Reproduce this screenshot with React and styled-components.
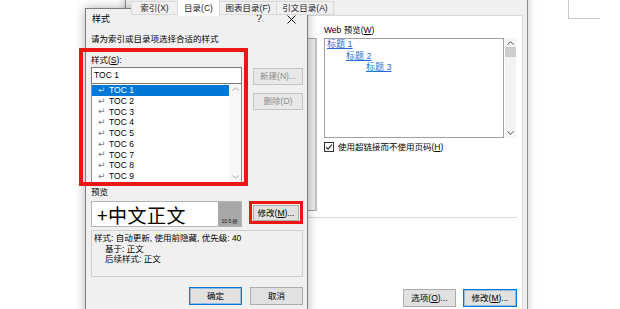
import React from "react";
import styled, { createGlobalStyle } from "styled-components";

const UI = `"Liberation Sans", "Noto Sans CJK SC", sans-serif`;

const Global = createGlobalStyle`
  html, body { margin: 0; padding: 0; background: #fff; }
  body { font-family: ${UI}; }
  * { box-sizing: border-box; }
`;

const Desktop = styled.div`
  position: relative;
  width: 620px;
  height: 309px;
  overflow: hidden;
  background: #fff;
  font-family: ${UI};
  font-size: 8.5px;
  line-height: 1;
  color: #000;
`;

const PageCorner = styled.div`
  position: absolute;
  left: 568px;
  top: -1px;
  width: 32px;
  height: 20px;
  border-left: 1px solid #c9c9c9;
  border-bottom: 1px solid #c9c9c9;
`;

/* ---------- back dialog (索引和目录) ---------- */
const BackDialog = styled.div`
  position: absolute;
  left: 125px;
  top: -12px;
  width: 403px;
  height: 340px;
  background: #f0f0f0;
  border: 1px solid #8c8c8c;
  box-shadow: 0 0 8px rgba(0, 0, 0, 0.22);
  display: flex;
  flex-direction: column;
  padding: 0 4px 0 4px;
`;

const TabStrip = styled.div`
  height: 26px;
  display: flex;
  align-items: flex-end;
  position: relative;
  z-index: 1;
`;

const Tab = styled.div`
  width: ${(p) => p.$w}px;
  height: ${(p) => (p.$active ? 17 : 14)}px;
  margin-left: -1px;
  margin-bottom: ${(p) => (p.$active ? -1 : 0)}px;
  background: ${(p) => (p.$active ? "#fff" : "#f0f0f0")};
  border: 1px solid #d9d9d9;
  border-bottom: ${(p) => (p.$active ? "none" : "1px solid #d9d9d9")};
  display: flex;
  align-items: center;
  justify-content: center;
  padding-top: ${(p) => (p.$active ? 0 : 1)}px;
  white-space: nowrap;
  color: #222;
  &:first-child { margin-left: 1px; }
`;

const TabPage = styled.div`
  flex: 1;
  background: #fff;
  border: 1px solid #d9d9d9;
  padding: 7px 5px 0 7px;
  display: flex;
  flex-direction: column;
`;

const TopRow = styled.div`
  display: grid;
  grid-template-columns: 179px 192px;
  column-gap: 7px;
  height: 188px;
`;

const Column = styled.div`
  display: flex;
  flex-direction: column;
`;

const GroupLabel = styled.div`
  height: 13px;
  line-height: 13px;
  padding-top: 1px;
`;

const PrintBox = styled.div`
  flex: 1;
  margin-top: 2px;
  display: flex;
  border: 1px solid #a0a0a0;
  border-right: 2px solid #c4c4c4;
  background: #fff;
`;

const PrintContent = styled.div`
  flex: 1;
  padding: 4px 6px;
  font-family: "Liberation Serif", "Noto Sans CJK SC", serif;
  line-height: 14px;
`;

const PrintScroll = styled.div`
  width: 9px;
  background: #ececec;
`;

const WebRow = styled.div`
  display: flex;
  margin-top: 2px;
  height: 100px;
  gap: 1px;
`;

const WebBox = styled.div`
  flex: 1;
  border: 1px solid #a0a0a0;
  background: #fff;
  padding: 0 2px;
`;

const LinkLine = styled.div`
  line-height: 11.5px;
  padding-left: ${(p) => p.$indent}px;
  font-size: 9px;
`;

const WebLink = styled.span`
  color: #2a6fd0;
  text-decoration: underline;
  text-underline-offset: 1px;
`;

const ScrollBar = styled.div`
  width: ${(p) => p.$w}px;
  background: ${(p) => p.$bg};
  display: flex;
  flex-direction: column;
  align-items: center;
  padding: 3px 0;
`;

const Thumb = styled.div`
  width: 100%;
  height: 10px;
  margin-top: 2px;
  background: #cdcdcd;
`;

const ScrollFill = styled.div`
  flex: 1;
`;

const CheckRow = styled.div`
  margin-top: 4px;
  display: flex;
  align-items: center;
  gap: 4px;
  height: 10px;
`;

const CheckBox = styled.div`
  width: 10px;
  height: 10px;
  border: 1px solid #333;
  background: #fff;
  display: flex;
  align-items: center;
  justify-content: center;
`;

const Separator = styled.div`
  margin-top: 6px;
  height: 1px;
  background: #d9d9d9;
`;

const ButtonRow = styled.div`
  display: flex;
  justify-content: flex-end;
  gap: ${(p) => p.$gap}px;
  margin-top: ${(p) => p.$mt}px;
`;

const Button = styled.div`
  width: ${(p) => p.$w}px;
  height: ${(p) => p.$h}px;
  flex: none;
  display: flex;
  align-items: center;
  justify-content: center;
  background: ${(p) => (p.$disabled ? "#e8e8e8" : "#e1e1e1")};
  border: 1px solid
    ${(p) => (p.$default ? "#0078d7" : p.$disabled ? "#c4c4c4" : "#adadad")};
  box-shadow: ${(p) =>
    p.$default ? "inset 0 0 0 1px rgba(0,120,215,0.35)" : "none"};
  color: ${(p) => (p.$disabled ? "#8d8d8d" : "#000")};
  white-space: nowrap;
`;

/* ---------- front dialog (样式) ---------- */
const FrontDialog = styled.div`
  position: absolute;
  left: 85px;
  top: 8px;
  width: 223px;
  height: 330px;
  background: #f0f0f0;
  border: 1px solid #7d7d7d;
  box-shadow: 0 0 10px rgba(0, 0, 0, 0.3);
  display: flex;
  flex-direction: column;
`;

const TitleBar = styled.div`
  height: 20px;
  display: flex;
  align-items: center;
  padding-left: 6px;
  font-size: 9px;
`;

const Title = styled.div`
  flex: 1;
`;

const TitleButton = styled.div`
  width: ${(p) => p.$w}px;
  margin-right: ${(p) => p.$mr || 0}px;
  height: 20px;
  display: flex;
  align-items: center;
  justify-content: center;
  font-size: 10px;
`;

const Body = styled.div`
  flex: 1;
  display: flex;
  flex-direction: column;
  padding: 0 4px 0 5px;
`;

const TextLine = styled.div`
  line-height: 11px;
  height: 11px;
  margin-top: ${(p) => p.$mt || 0}px;
  white-space: nowrap;
`;

const MainGrid = styled.div`
  margin-top: 10px;
  display: grid;
  grid-template-columns: 151px 50px;
  column-gap: 11px;
`;

const Input = styled.div`
  margin-top: 1px;
  height: 17px;
  border: 1px solid #7a7a7a;
  background: #fff;
  padding-left: 2px;
  display: flex;
  align-items: center;
  font-size: 8.5px;
`;

const ListBox = styled.div`
  height: 99px;
  border: 1px solid #8f8f8f;
  border-top: none;
  background: #fff;
  display: flex;
`;

const ListItems = styled.div`
  flex: 1;
  padding-top: 1px;
`;

const ListItem = styled.div`
  height: 10.75px;
  display: flex;
  align-items: center;
  padding-left: 6px;
  background: ${(p) => (p.$selected ? "#0078d7" : "transparent")};
  color: ${(p) => (p.$selected ? "#fff" : "#000")};
`;

const ParaMark = styled.span`
  width: 11px;
  font-family: "DejaVu Sans", sans-serif;
  font-size: 9px;
  line-height: 1;
  color: ${(p) => (p.$selected ? "#b9d9f5" : "#7a7a7a")};
`;

const SideButtons = styled.div`
  padding-top: 13px;
  display: flex;
  flex-direction: column;
  gap: 8px;
`;

const PreviewRow = styled.div`
  margin-top: 3px;
  display: flex;
  align-items: flex-end;
`;

const PreviewBox = styled.div`
  width: 151px;
  height: 26px;
  border: 1px solid #b4b4b4;
  display: flex;
`;

const PreviewSample = styled.div`
  flex: 1;
  background: #fff;
  display: flex;
  align-items: center;
  padding-left: 5px;
  font-family: "Noto Sans CJK SC", sans-serif;
  font-size: 19px;
  letter-spacing: 0.5px;
`;

const SizeBlock = styled.div`
  width: 23px;
  background: #a8a8a8;
  display: flex;
  align-items: flex-end;
  justify-content: center;
  padding-bottom: 2px;
`;

const SizeText = styled.span`
  font-size: 5px;
  white-space: nowrap;
  color: #111;
`;

const PreviewAction = styled.div`
  margin-left: 11px;
  margin-bottom: 6px;
`;

const DescBox = styled.div`
  margin-top: 3px;
  height: 47px;
  border: 1px solid #cfcfcf;
  background: #f0f0f0;
  padding: 2px 2px;
`;

const DescLine = styled.div`
  line-height: 10.5px;
  padding-left: ${(p) => p.$indent || 0}px;
  white-space: nowrap;
`;

const RedFrame = styled.div`
  position: absolute;
  left: ${(p) => p.$x}px;
  top: ${(p) => p.$y}px;
  width: ${(p) => p.$w}px;
  height: ${(p) => p.$h}px;
  border: ${(p) => p.$t}px solid #ee1515;
  pointer-events: none;
`;

const Chevron = ({ up, color }) => (
  <svg width="7" height="4" viewBox="0 0 7 4">
    <polyline
      points={up ? "0.5,3.5 3.5,0.8 6.5,3.5" : "0.5,0.5 3.5,3.2 6.5,0.5"}
      fill="none"
      stroke={color}
      strokeWidth="1"
    />
  </svg>
);

const tocItems = ["TOC 1", "TOC 2", "TOC 3", "TOC 4", "TOC 5", "TOC 6", "TOC 7", "TOC 8", "TOC 9"];

export default function App() {
  return (
    <>
      <Global />
      <Desktop>
        <PageCorner />

        <BackDialog>
          <TabStrip>
            <Tab $w={47}>索引(X)</Tab>
            <Tab $w={43} $active>目录(C)</Tab>
            <Tab $w={58}>图表目录(F)</Tab>
            <Tab $w={58}>引文目录(A)</Tab>
          </TabStrip>
          <TabPage>
            <TopRow>
              <Column>
                <GroupLabel>打印预览(V)</GroupLabel>
                <PrintBox>
                  <PrintContent>
                    <div>标题 1 ............ 1</div>
                    <div>标题 2 ............ 3</div>
                    <div>标题 3 ............ 5</div>
                  </PrintContent>
                  <PrintScroll />
                </PrintBox>
              </Column>
              <Column>
                <GroupLabel>Web 预览(<u>W</u>)</GroupLabel>
                <WebRow>
                  <WebBox>
                    <LinkLine $indent={0}><WebLink>标题 1</WebLink></LinkLine>
                    <LinkLine $indent={19}><WebLink>标题 2</WebLink></LinkLine>
                    <LinkLine $indent={39}><WebLink>标题 3</WebLink></LinkLine>
                  </WebBox>
                  <ScrollBar $w={11} $bg="#f3f3f3">
                    <Chevron up color="#555" />
                    <Thumb />
                    <ScrollFill />
                    <Chevron color="#555" />
                  </ScrollBar>
                </WebRow>
                <CheckRow>
                  <CheckBox>
                    <svg width="8" height="8" viewBox="0 0 8 8">
                      <polyline points="1,4.2 3,6.2 7,1.6" fill="none" stroke="#222" strokeWidth="1.1" />
                    </svg>
                  </CheckBox>
                  <span>使用超链接而不使用页码(<u>H</u>)</span>
                </CheckRow>
              </Column>
            </TopRow>
            <Separator />
            <ButtonRow $gap={7} $mt={71}>
              <Button $w={53} $h={18}>选项(<u>O</u>)...</Button>
              <Button $w={54} $h={18} $default>修改(<u>M</u>)...</Button>
            </ButtonRow>
          </TabPage>
        </BackDialog>

        <FrontDialog>
          <TitleBar>
            <Title>样式</Title>
            <TitleButton $w={28} $mr={3}>?</TitleButton>
            <TitleButton $w={31}>
              <svg width="9" height="9" viewBox="0 0 9 9">
                <path d="M0.5,0.5 L8.5,8.5 M8.5,0.5 L0.5,8.5" stroke="#111" strokeWidth="1" />
              </svg>
            </TitleButton>
          </TitleBar>
          <Body>
            <TextLine $mt={5}>请为索引或目录项选择合适的样式</TextLine>
            <MainGrid>
              <Column>
                <TextLine>样式(<u>S</u>):</TextLine>
                <Input>TOC 1</Input>
                <ListBox>
                  <ListItems>
                    {tocItems.map((t, i) => (
                      <ListItem key={t} $selected={i === 0}>
                        <ParaMark $selected={i === 0}>↵</ParaMark>
                        {t}
                      </ListItem>
                    ))}
                  </ListItems>
                  <ScrollBar $w={12} $bg="#f7f7f7">
                    <Chevron up color="#a6a6a6" />
                    <ScrollFill />
                    <Chevron color="#a6a6a6" />
                  </ScrollBar>
                </ListBox>
              </Column>
              <SideButtons>
                <Button $w={50} $h={17} $disabled>新建(N)...</Button>
                <Button $w={50} $h={17} $disabled>删除(D)</Button>
              </SideButtons>
            </MainGrid>
            <TextLine $mt={4}>预览</TextLine>
            <PreviewRow>
              <PreviewBox>
                <PreviewSample>+中文正文</PreviewSample>
                <SizeBlock>
                  <SizeText>10.5 磅</SizeText>
                </SizeBlock>
              </PreviewBox>
              <PreviewAction>
                <Button $w={46} $h={16}>修改(<u>M</u>)...</Button>
              </PreviewAction>
            </PreviewRow>
            <DescBox>
              <DescLine>样式: 自动更新, 使用前隐藏, 优先级: 40</DescLine>
              <DescLine $indent={11}>基于: 正文</DescLine>
              <DescLine $indent={11}>后续样式: 正文</DescLine>
            </DescBox>
            <ButtonRow $gap={8} $mt={10}>
              <Button $w={53} $h={18} $default>确定</Button>
              <Button $w={53} $h={18}>取消</Button>
            </ButtonRow>
          </Body>
          <RedFrame $x={-7} $y={39} $w={169} $h={138} $t={4} />
          <RedFrame $x={163} $y={192} $w={54} $h={23} $t={3} />
        </FrontDialog>
      </Desktop>
    </>
  );
}
